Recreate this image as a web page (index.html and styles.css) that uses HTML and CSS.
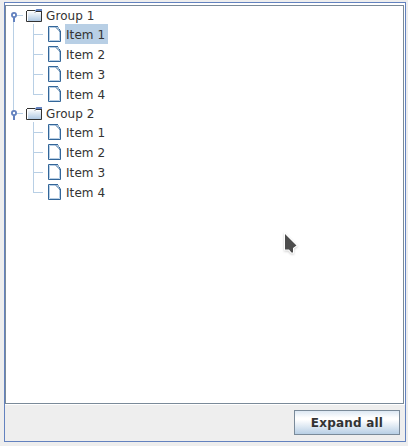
FILE: index.html
```html
<!DOCTYPE html>
<html lang="en">
<head>
<meta charset="utf-8">
<title>Tree</title>
<link rel="stylesheet" href="styles.css">
</head>
<body>
<svg class="defs" width="0" height="0" aria-hidden="true">
  <defs>
    <linearGradient id="fold" x1="0" y1="0" x2="0" y2="1"><stop offset="0" stop-color="#fff"/><stop offset="1" stop-color="#b0c9e3"/></linearGradient>
    <symbol id="folder" viewBox="0 0 16 13">
      <path d="M1 2H9V4H15V12H1z" fill="url(#fold)"/>
      <path d="M1.500 12V2.500H9" fill="none" stroke="#fff"/>
      <path d="M.5 2V12.500H15.500V2M1 1.500H9M9 3.500L10 2.500H15" fill="none" stroke="#333"/>
      <path d="M9 3V1.500L10.500 0H16V2H10L9 3z" fill="#6382bf"/>
    </symbol>
    <symbol id="file" viewBox="0 0 13 16">
      <path d="M0 0H10L13 6V16H0z" fill="#fff"/>
      <path d="M1.500 14.500H11.500V6M1.500 14V1.500H7" fill="none" stroke="#b8cfe5"/>
      <path d="M12.500 5V15.500H.5V.5H10" fill="none" stroke="#336699"/>
      <path d="M7.500 1L12.500 6M9.500 .5L10.500 2.500L12 4V6" fill="none" stroke="#336699"/>
      <path d="M9 1h1v1h-1zM10 2.500h1v1h-1z" fill="#b8cfe5"/>
    </symbol>
    <symbol id="handle" viewBox="0 0 14 10">
      <path d="M8 3.500h6" stroke="#b8cfe5"/>
      <circle cx="5" cy="3" r="2.100" fill="#fff" stroke="#6382bf" stroke-width="1.800"/>
      <path d="M5 5v5" stroke="#6382bf" stroke-width="2"/>
    </symbol>
  </defs>
</svg>
<main class="panel">
  <section class="viewport">
    <ul class="tree">
      <li class="group first">
        <div class="group-row"><svg class="handle"><use href="#handle"/></svg><svg class="folder"><use href="#folder"/></svg><span class="label">Group 1</span></div>
        <ul class="items">
          <li class="item"><svg class="file"><use href="#file"/></svg><span class="label selected">Item 1</span></li>
          <li class="item"><svg class="file"><use href="#file"/></svg><span class="label">Item 2</span></li>
          <li class="item"><svg class="file"><use href="#file"/></svg><span class="label">Item 3</span></li>
          <li class="item"><svg class="file"><use href="#file"/></svg><span class="label">Item 4</span></li>
        </ul>
      </li>
      <li class="group">
        <div class="group-row"><svg class="handle"><use href="#handle"/></svg><svg class="folder"><use href="#folder"/></svg><span class="label">Group 2</span></div>
        <ul class="items">
          <li class="item"><svg class="file"><use href="#file"/></svg><span class="label">Item 1</span></li>
          <li class="item"><svg class="file"><use href="#file"/></svg><span class="label">Item 2</span></li>
          <li class="item"><svg class="file"><use href="#file"/></svg><span class="label">Item 3</span></li>
          <li class="item"><svg class="file"><use href="#file"/></svg><span class="label">Item 4</span></li>
        </ul>
      </li>
    </ul>
  </section>
  <footer class="actions"><button class="button">Expand all</button></footer>
</main>
<svg class="cursor" viewBox="0 0 18 26"><path d="M3 2V17.500H7L9.500 20.500H11V16L14.500 13.500z" fill="#4d4d4d" stroke="#fff" stroke-width="2" paint-order="stroke"/></svg>
</body>
</html>
```

FILE: styles.css
```css
* { box-sizing: border-box; }
body { margin: 0; height: 446px; padding: 2px 2px 4px 4px; background: #eee; font: 12px/18px "DejaVu Sans", sans-serif; color: #333; overflow: hidden; }
.defs { position: absolute; }
svg { display: block; flex: none; }
ul { margin: 0; padding: 0; list-style: none; }
.panel { height: 440px; border: 1px solid #6382bf; display: flex; flex-direction: column; background: #eee; }
.viewport { height: 402px; border-top: 2px solid #fff; border-right: 1px solid #fff; border-bottom: 1px solid #fff; }
.tree { height: 399px; border: 1px solid #7a8a99; background: #fff; }
.group { position: relative; }
.group.first::before { content: ""; position: absolute; left: 7px; top: 14px; width: 1px; height: 90px; background: #b8cfe5; }
.group-row { height: 18px; display: flex; align-items: flex-start; padding-left: 3px; position: relative; }
.handle { width: 14px; height: 10px; margin: 6px 3px 0 0; }
.folder { width: 16px; height: 13px; margin: 3px 4px 0 0; }
.items { position: relative; }
.items::before { content: ""; position: absolute; left: 27px; top: 0; width: 1px; height: 71px; background: #b8cfe5; }
.item { height: 20px; display: flex; align-items: center; padding-left: 27px; }
.item::before { content: ""; width: 10px; height: 1px; margin: 1px 5px 0 0; background: #b8cfe5; }
.file { width: 13px; height: 16px; margin-right: 4px; }
.label { white-space: nowrap; letter-spacing: .08px; }
.group-row .label { height: 18px; line-height: 20px; }
.item .label { height: 20px; line-height: 22px; width: 43px; padding-left: 1px; }
.selected { background: #b8cfe5; }
.actions { display: flex; justify-content: flex-end; padding: 5px 5px; }
.button { width: 106px; height: 25px; padding: 0; border: 1px solid #7a8a99; background: linear-gradient(#dde8f3 0, #fff 30%, #fff 38%, #b8cfe5 100%); font: bold 12px "DejaVu Sans", sans-serif; letter-spacing: .2px; color: #333; }
.cursor { position: absolute; left: 282px; top: 232px; width: 18px; height: 26px; filter: drop-shadow(0 1px 1px #0003); }
```
